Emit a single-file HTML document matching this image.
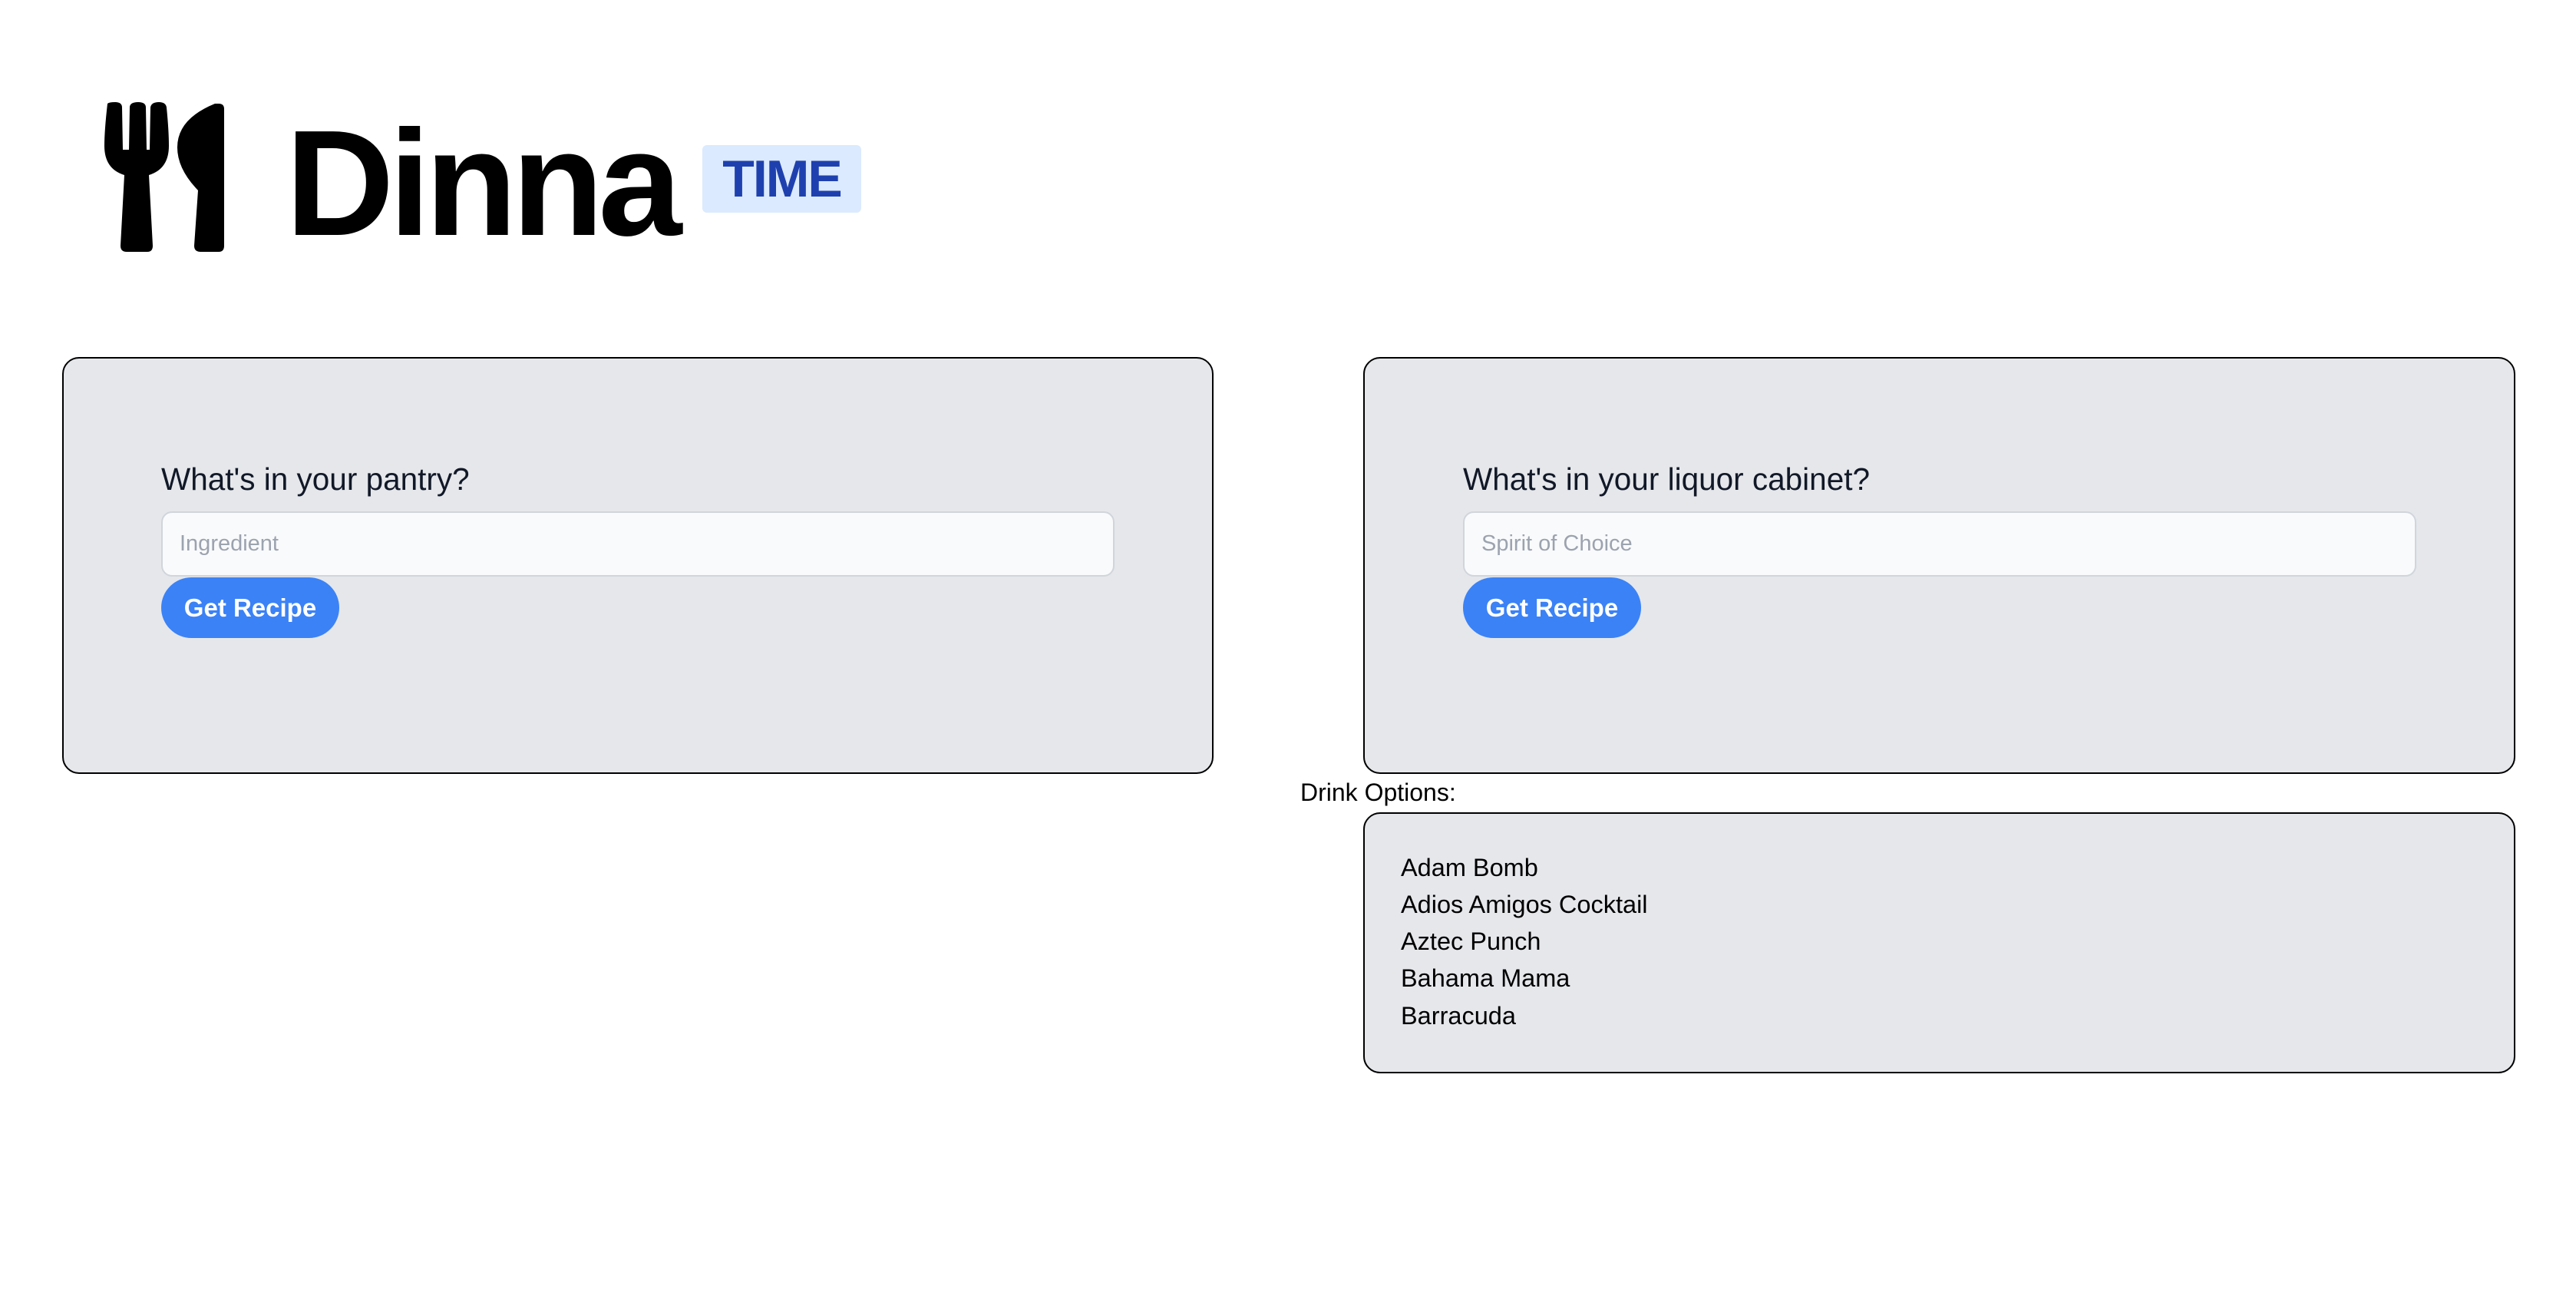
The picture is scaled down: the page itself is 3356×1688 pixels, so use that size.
<!DOCTYPE html>
<html><head><meta charset="utf-8"><style>
*{box-sizing:border-box;margin:0;padding:0}
body{width:3356px;height:1688px;background:#fff;font-family:"Liberation Sans",sans-serif;position:relative;overflow:hidden}
.abs{position:absolute}
.card{position:absolute;background:#e5e7eb;border:2px solid #000;border-radius:22px}
h2{position:absolute;font-size:40.5px;font-weight:400;color:#111827;white-space:nowrap}
.inp{position:absolute;background:#f9fafb;border:2px solid #d1d5db;border-radius:14px;font-size:29px;color:#9ca3af;padding-left:22px;line-height:80px}
.btn{position:absolute;background:#3b82f6;color:#fff;font-weight:700;font-size:33px;border-radius:40px;text-align:center;line-height:79px}
.li{position:absolute;left:1825px;font-size:32.5px;color:#000;white-space:nowrap}
</style></head><body>
<svg class="abs" style="left:130px;top:120px" width="180" height="220" viewBox="0 0 180 220">
<path fill="#000" d="M10 15 Q12 13 20 13 Q29 13 29 20 L30 75 L38 75 L39 20 Q39 13 50 13 Q60 13 60 20 L61 75 L65 75 L66 20 Q67 13 77 13 Q86 13 87 20 Q90 50 90 70 Q90 100 64 108 L69 200 Q69 208 62 208 L35 208 Q27 208 27 200 L32 108 Q6 100 6 70 Q6 50 10 15 Z"/>
<path fill="#000" d="M155 15 Q162 15 162 22 L162 200 Q162 208 155 208 L131 208 Q123 208 123 200 L128 128 Q101 100 101 72 Q101 35 150 15 Z"/>
</svg>
<div class="abs" style="left:372px;top:124px;font-size:196px;font-weight:700;letter-spacing:-7px;line-height:230px;color:#000">Dinna</div>
<div class="abs" style="left:915px;top:189px;width:207px;height:88px;background:#dbeafe;border-radius:6px;color:#1e40af;font-size:68px;font-weight:700;line-height:88px;text-align:center;letter-spacing:-2px">TIME</div>

<div class="card" style="left:81px;top:465px;width:1500px;height:543px"></div>
<h2 style="left:210px;top:601px">What's in your pantry?</h2>
<div class="inp" style="left:210px;top:666px;width:1242px;height:85px">Ingredient</div>
<div class="btn" style="left:210px;top:752px;width:232px;height:79px">Get Recipe</div>

<div class="card" style="left:1776px;top:465px;width:1501px;height:543px"></div>
<h2 style="left:1906px;top:601px">What's in your liquor cabinet?</h2>
<div class="inp" style="left:1906px;top:666px;width:1242px;height:85px">Spirit of Choice</div>
<div class="btn" style="left:1906px;top:752px;width:232px;height:79px">Get Recipe</div>

<div class="abs" style="left:1694px;top:1014px;font-size:32px;color:#000">Drink Options:</div>
<div class="card" style="left:1776px;top:1058px;width:1501px;height:340px"></div>
<div class="li" style="top:1112px">Adam Bomb</div>
<div class="li" style="top:1160px">Adios Amigos Cocktail</div>
<div class="li" style="top:1208px">Aztec Punch</div>
<div class="li" style="top:1256px">Bahama Mama</div>
<div class="li" style="top:1305px">Barracuda</div>
</body></html>
